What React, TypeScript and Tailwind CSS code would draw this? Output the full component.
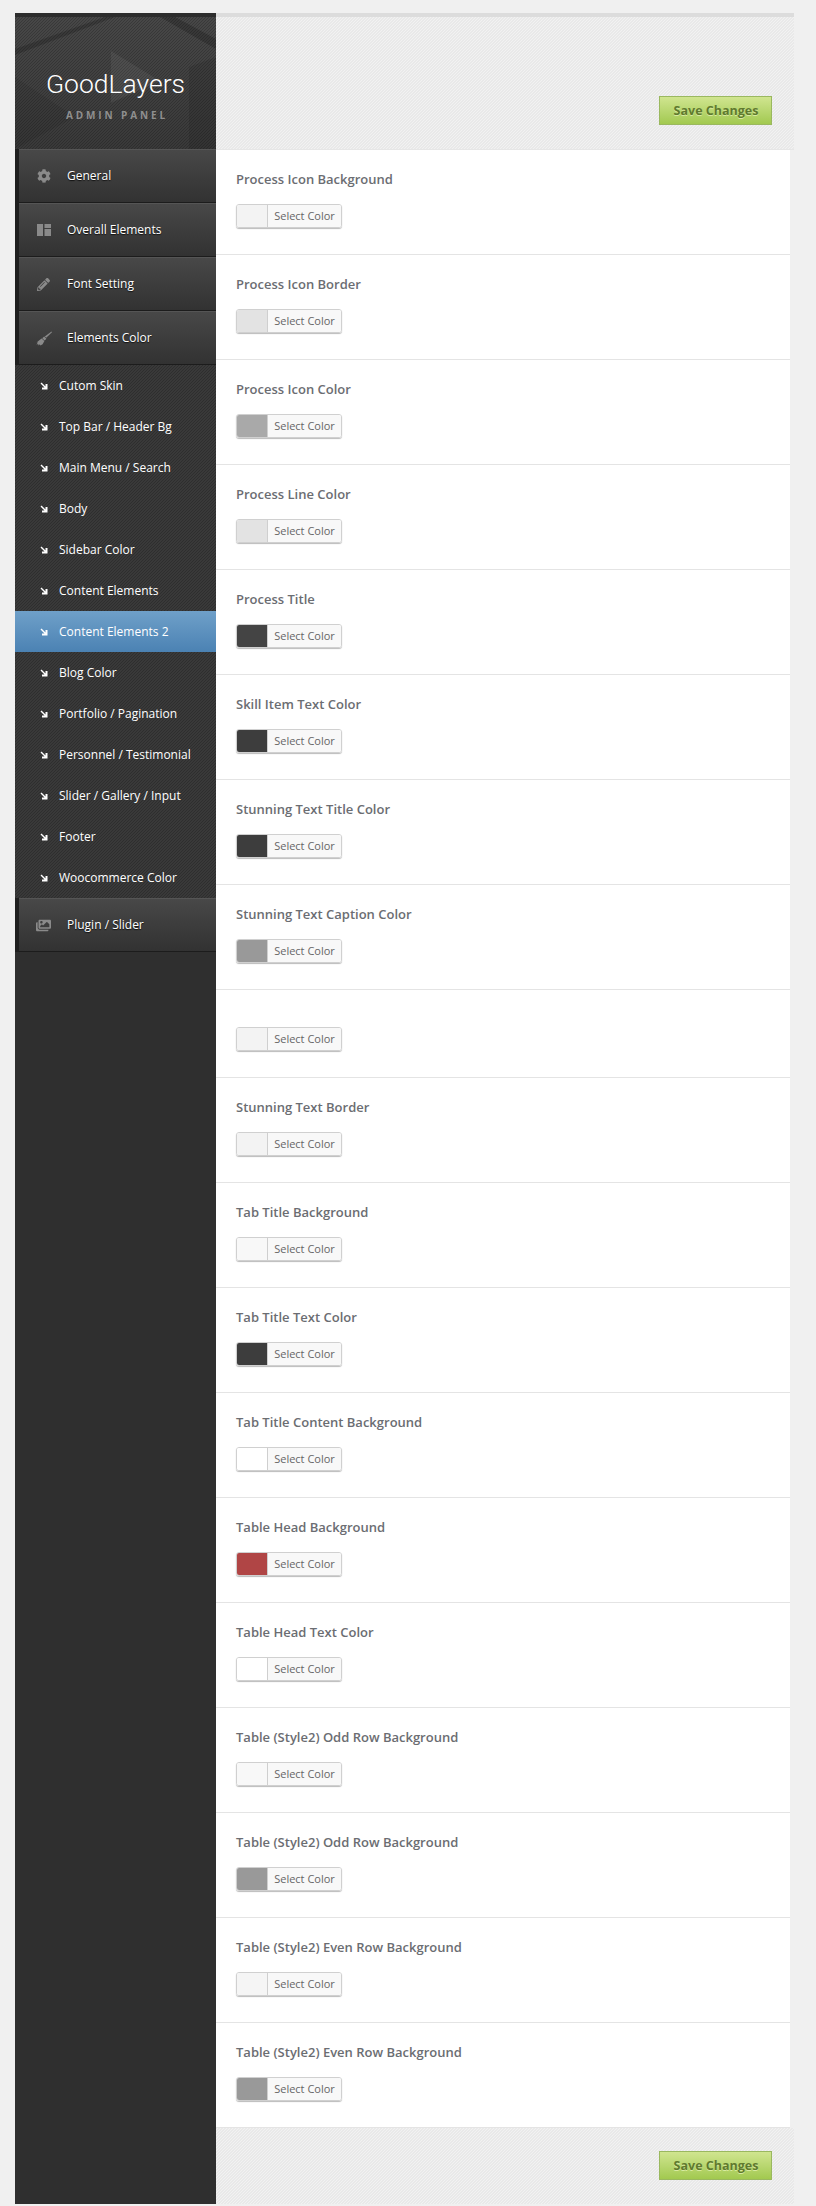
import { FaCog, FaPencilAlt, FaImages } from "react-icons/fa";
import type { ReactNode } from "react";

const subLinks = [
  "Cutom Skin",
  "Top Bar / Header Bg",
  "Main Menu / Search",
  "Body",
  "Sidebar Color",
  "Content Elements",
  "Content Elements 2",
  "Blog Color",
  "Portfolio / Pagination",
  "Personnel / Testimonial",
  "Slider / Gallery / Input",
  "Footer",
  "Woocommerce Color",
];

const options = [
  { title: "Process Icon Background", color: "bg-[#f3f3f3]" },
  { title: "Process Icon Border", color: "bg-[#e3e3e3]" },
  { title: "Process Icon Color", color: "bg-[#a9a9a9]" },
  { title: "Process Line Color", color: "bg-[#e3e3e3]" },
  { title: "Process Title", color: "bg-[#444444]" },
  { title: "Skill Item Text Color", color: "bg-[#3d3d3d]" },
  { title: "Stunning Text Title Color", color: "bg-[#3d3d3d]" },
  { title: "Stunning Text Caption Color", color: "bg-[#999999]" },
  { title: "", color: "bg-[#f3f3f3]" },
  { title: "Stunning Text Border", color: "bg-[#f3f3f3]" },
  { title: "Tab Title Background", color: "bg-[#f8f8f8]" },
  { title: "Tab Title Text Color", color: "bg-[#3d3d3d]" },
  { title: "Tab Title Content Background", color: "bg-white" },
  { title: "Table Head Background", color: "bg-[#b04545]" },
  { title: "Table Head Text Color", color: "bg-white" },
  { title: "Table (Style2) Odd Row Background", color: "bg-[#f8f8f8]" },
  { title: "Table (Style2) Odd Row Background", color: "bg-[#999999]" },
  { title: "Table (Style2) Even Row Background", color: "bg-[#f5f5f5]" },
  { title: "Table (Style2) Even Row Background", color: "bg-[#999999]" },
];

const LayoutIcon = () => (
  <svg width="14" height="12" viewBox="0 0 14 12" fill="#8a8a8a">
    <rect x="0" y="0" width="6" height="12" />
    <rect x="7.5" y="0" width="6.5" height="4" />
    <rect x="7.5" y="5" width="6.5" height="7" />
  </svg>
);

const BrushIcon = () => (
  <svg width="16" height="15" viewBox="0 0 16 15" fill="#8a8a8a">
    <path d="M15.5 0.5 L16 1.2 L10.2 6.8 L8.8 5.4 Z" />
    <path d="M8.2 5.6 L10.4 7.8 L8.6 9.4 L6.2 7.2 Z" />
    <path d="M5.6 7.4 L8.4 10 L6.6 13.2 L4.4 14.6 L3.8 13.2 L2.6 14.4 L2.2 13 L0.4 13.4 L2 11.6 L0.6 11.4 L3 9.6 Z" />
  </svg>
);

const ArrowIcon = () => (
  <svg width="8" height="8" viewBox="0 0 8 8" className="shrink-0">
    <path d="M0.5 1.5 L1.5 0.5 L5.5 4.5 L5.5 2 L7.5 2 L7.5 7.5 L2 7.5 L2 5.5 L4.5 5.5 Z" fill="#ffffff" />
  </svg>
);

const MainItem = ({ icon, label }: { icon: ReactNode; label: string }) => (
  <div className="bg-[#1f1f1f] pl-[4px]">
    <div className="h-[54px] flex items-center bg-gradient-to-b from-[#484848] to-[#323232] border-t border-t-[#555555] border-b border-b-[#1c1c1c]">
      <div className="w-[48px] flex justify-center pl-[1px] shrink-0">{icon}</div>
      <span className="text-[12px] text-white [text-shadow:0_1px_1px_#111]">{label}</span>
    </div>
  </div>
);

const SubItem = ({ label, active }: { label: string; active: boolean }) => (
  <div
    className={
      active
        ? "h-[41px] flex items-center pl-[25px] gap-[11px] bg-gradient-to-b from-[#6fa0c9] to-[#4b82b3]"
        : "h-[41px] flex items-center pl-[25px] gap-[11px]"
    }
  >
    <ArrowIcon />
    <span className="text-[12px] text-white">{label}</span>
  </div>
);

const SaveButton = () => (
  <button className="w-[113px] h-[29px] pt-[2px] pl-[1px] border border-[#9ab85f] bg-gradient-to-b from-[#d0e58f] to-[#a2c94f] text-[12.5px] font-bold text-[#5f7a2e] [text-shadow:0_1px_0_#d8eaa0]">
    Save Changes
  </button>
);

const ColorPicker = ({ color }: { color: string }) => (
  <div className="w-[106px] h-[24px] flex rounded-[3px] border border-[#d0d0d0] overflow-hidden shadow-[0_1px_1px_#bbbbbb]">
    <div className={`w-[31px] border-r border-r-[#cfcfcf] ${color}`} />
    <div className="flex-1 bg-[#f8f8f8] text-[11px] text-[#666666] flex items-center justify-center">Select Color</div>
  </div>
);

const OptionRow = ({ title, color }: { title: string; color: string }) => (
  <div className="border-b border-b-[#e4e4e4] pl-[20px]">
    {title && <div className="h-[54px] pt-[19px] text-[13px] leading-[20px] font-semibold text-[#6b6d72]">{title}</div>}
    <div className={title ? "h-[50px]" : "pt-[37px] h-[87px]"}>
      <ColorPicker color={color} />
    </div>
  </div>
);

const App = () => {
  return (
    <div className="min-h-[2206px] bg-[#f0f0f0] pt-[13px] pl-[15px] pb-[2px] font-['Open_Sans',sans-serif]">
      <div className="flex w-[779px] min-h-[2191px]">
        <aside className="w-[201px] shrink-0 bg-[#2f2f2f] flex flex-col">
          <div className="relative h-[136px] overflow-hidden border-t-[4px] border-t-[#2d2d2d] bg-[#3c3c3c] bg-[linear-gradient(135deg,#474747_25%,#393939_25%,#393939_50%,#474747_50%,#474747_75%,#393939_75%)] bg-[length:3px_3px]">
            <div className="absolute inset-0 bg-gradient-to-b from-transparent to-black/20" />
            <svg className="absolute inset-0" width="201" height="132" viewBox="0 0 201 132">
              <path d="M0 32 L90 0 L100 0 L0 38 Z" fill="#000" opacity="0.18" />
              <path d="M160 0 L201 22 L201 32 L145 0 Z" fill="#000" opacity="0.2" />
              <path d="M96 34 L145 64 L96 86 Z" fill="#fff" opacity="0.06" />
              <path d="M0 60 L60 100 L0 132 Z" fill="#000" opacity="0.08" />
              <path d="M174 50 L201 40 L201 132 L174 132 Z" fill="#000" opacity="0.1" />
            </svg>
            <div className="relative pt-[51px] text-center font-['Roboto',sans-serif] font-light text-[26.5px] leading-[32px] text-white">
              GoodLayers
            </div>
            <div className="relative pt-[8px] pl-[3px] text-center text-[10px] leading-[14px] font-bold tracking-[2.9px] text-[#8f8f8f]">
              ADMIN PANEL
            </div>
          </div>
          <MainItem icon={<FaCog size={14} color="#8a8a8a" />} label="General" />
          <MainItem icon={<LayoutIcon />} label="Overall Elements" />
          <MainItem icon={<FaPencilAlt size={13} color="#8a8a8a" />} label="Font Setting" />
          <MainItem icon={<BrushIcon />} label="Elements Color" />
          <div className="bg-[#333333] bg-[linear-gradient(135deg,#393939_25%,#2e2e2e_25%,#2e2e2e_50%,#393939_50%,#393939_75%,#2e2e2e_75%)] bg-[length:3px_3px]">
            {subLinks.map((label) => (
              <SubItem key={label} label={label} active={label === "Content Elements 2"} />
            ))}
          </div>
          <MainItem icon={<FaImages size={15} color="#8a8a8a" />} label="Plugin / Slider" />
        </aside>
        <main className="w-[578px] flex flex-col">
          <header className="h-[137px] border-t-[4px] border-t-[#dcdcdc] border-b border-b-[#e6e6e6] bg-[#efefef] bg-[linear-gradient(135deg,#e9e9e9_25%,#f2f2f2_25%,#f2f2f2_50%,#e9e9e9_50%,#e9e9e9_75%,#f2f2f2_75%)] bg-[length:3px_3px] flex justify-end items-start pt-[79px] pr-[22px]">
            <SaveButton />
          </header>
          <div className="bg-white mr-[4px]">
            {options.map((opt, i) => (
              <OptionRow key={i} title={opt.title} color={opt.color} />
            ))}
          </div>
          <footer className="flex-1 bg-[#efefef] bg-[linear-gradient(135deg,#e9e9e9_25%,#f2f2f2_25%,#f2f2f2_50%,#e9e9e9_50%,#e9e9e9_75%,#f2f2f2_75%)] bg-[length:3px_3px] flex justify-end items-start pt-[23px] pr-[22px]">
            <SaveButton />
          </footer>
        </main>
      </div>
    </div>
  );
};

export default App;
